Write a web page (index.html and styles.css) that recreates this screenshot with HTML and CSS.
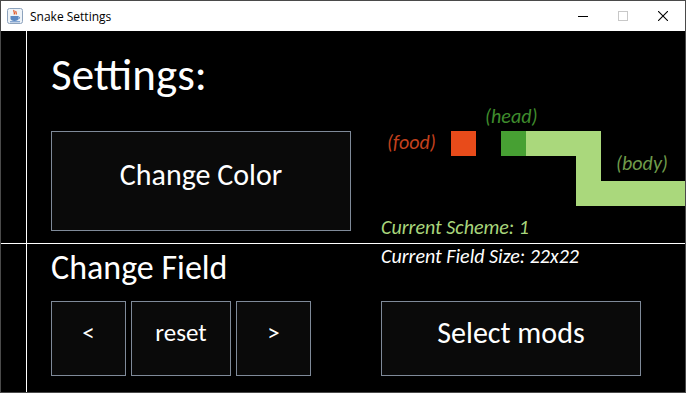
FILE: index.html
```html
<!DOCTYPE html>
<html lang="en">
<head>
    <meta charset="UTF-8">
    <title>Snake Settings</title>
    <link rel="stylesheet" href="styles.css">
</head>
<body>
<div class="window">
    <div class="titlebar">
        <svg class="app-icon" width="16" height="16" viewBox="0 0 16 16">
            <rect x="0.5" y="0.5" width="15" height="15" rx="2" fill="#eef3f8" stroke="#8da3bd"/>
            <path d="M7 2c-1 1.5 1.5 2.5 0 4.5M9 3c-0.8 1.2 1 2 0 3.5" stroke="#e2501c" stroke-width="1.2" fill="none"/>
            <path d="M3.5 8h8v2.5c0 1.5-1.5 2.5-4 2.5s-4-1-4-2.5z" fill="#5b87c2"/>
            <path d="M11.5 8.8c1.5 0 1.5 2 0 2" stroke="#5b87c2" fill="none"/>
            <path d="M3 13.8h10" stroke="#5b87c2"/>
        </svg>
        <span class="title">Snake Settings</span>
        <div class="controls">
            <svg width="10" height="10" viewBox="0 0 10 10"><path d="M0 5.5h10" stroke="#000"/></svg>
            <svg width="10" height="10" viewBox="0 0 10 10"><rect x="0.5" y="0.5" width="9" height="9" fill="none" stroke="#c8c8c8"/></svg>
            <svg width="10" height="10" viewBox="0 0 10 10"><path d="M0 0l10 10M10 0l-10 10" stroke="#000" stroke-width="1.1"/></svg>
        </div>
    </div>

    <div class="board">
        <div class="col-left">
            <h1 class="heading">Settings:</h1>
            <button class="btn btn-color">Change Color</button>
            <h2 class="subheading">Change Field</h2>
            <div class="field-row">
                <button class="btn btn-small">&lt;</button>
                <button class="btn btn-reset">reset</button>
                <button class="btn btn-small">&gt;</button>
            </div>
        </div>

        <div class="col-right">
            <!-- preview of the colour scheme -->
            <div class="preview">
                <span class="tag tag-food">(food)</span>
                <span class="tag tag-head">(head)</span>
                <span class="tag tag-body">(body)</span>
                <div class="cell food" style="left:70px;top:25px"></div>
                <div class="cell head" style="left:120px;top:25px"></div>
                <div class="cell body" style="left:145px;top:25px"></div>
                <div class="cell body" style="left:170px;top:25px"></div>
                <div class="cell body" style="left:195px;top:25px"></div>
                <div class="cell body" style="left:195px;top:50px"></div>
                <div class="cell body" style="left:195px;top:75px"></div>
                <div class="cell body" style="left:220px;top:75px"></div>
                <div class="cell body" style="left:245px;top:75px"></div>
                <div class="cell body" style="left:270px;top:75px"></div>
                <div class="cell body" style="left:295px;top:75px"></div>
            </div>
            <p class="info info-scheme">Current Scheme: 1</p>
            <p class="info">Current Field Size: 22x22</p>
            <button class="btn btn-mods">Select mods</button>
        </div>
    </div>
</div>
</body>
</html>
```

FILE: styles.css
```css
* {
    box-sizing: border-box;
}
body {
    margin: 0;
    background: #000;
    font-family: Calibri, Carlito, "Open Sans", sans-serif;
}
.window {
    width: 686px;
    height: 393px;
    border: 1px solid #4a4a4a;
    overflow: hidden;
    display: flex;
    flex-direction: column;
}
.titlebar {
    height: 30px;
    flex: none;
    background: #fff;
    display: flex;
    align-items: center;
    padding-left: 6px;
}
.app-icon {
    margin-right: 7px;
}
.title {
    font-family: "Open Sans", "Noto Sans", sans-serif;
    font-size: 12px;
    color: #000;
}
.controls {
    margin-left: auto;
    display: flex;
    gap: 30px;
    margin-right: 17px;
}
.controls svg {
    display: block;
}

/* black drawing area with the two white guide lines */
.board {
    flex: 1;
    display: flex;
    gap: 30px;
    padding-left: 50px;
    background:
        linear-gradient(#fff, #fff) 25px 0 / 1px 100% no-repeat,
        linear-gradient(#fff, #fff) 0 212px / 100% 1px no-repeat,
        #000;
    color: #fff;
}
.col-left {
    width: 300px;
    padding-top: 18px;
    display: flex;
    flex-direction: column;
}
.col-right {
    width: 305px;
    padding-top: 75px;
    display: flex;
    flex-direction: column;
}
.heading {
    margin: 0;
    font-size: 45px;
    font-weight: normal;
    line-height: 51px;
}
.subheading {
    margin: 18px 0 0;
    font-size: 34px;
    font-weight: normal;
    line-height: 37px;
}
.btn {
    background: #0a0a0a;
    border: 1px solid #7f8a99;
    color: #fff;
    font-family: inherit;
    display: flex;
    align-items: center;
    justify-content: center;
    padding: 0 0 12px;
}
.btn-color {
    width: 300px;
    height: 100px;
    margin-top: 31px;
    font-size: 30px;
    padding-bottom: 14px;
}
.field-row {
    margin-top: 15px;
    display: flex;
    gap: 5px;
}
.btn-small {
    width: 75px;
    height: 75px;
    font-size: 25px;
}
.btn-reset {
    width: 100px;
    height: 75px;
    font-size: 25px;
}
.btn-mods {
    width: 260px;
    height: 75px;
    margin-top: 30px;
    font-size: 30px;
}

.preview {
    position: relative;
    height: 100px;
}
.cell {
    position: absolute;
    width: 25px;
    height: 25px;
}
.food { background: #e84b1a; }
.head { background: #47a033; }
.body { background: #aad87c; }
.tag {
    position: absolute;
    font-style: italic;
    font-size: 20px;
    line-height: 20px;
}
.tag-food { left: 6px; top: 26px; color: #c3411d; }
.tag-head { left: 104px; top: 0; color: #3f8c2d; }
.tag-body { left: 235px; top: 47px; color: #6f9b4b; }
.info {
    margin: 0;
    font-style: italic;
    font-size: 20px;
    line-height: 29px;
}
.info-scheme {
    margin-top: 7px;
    color: #a9d67c;
}
```
